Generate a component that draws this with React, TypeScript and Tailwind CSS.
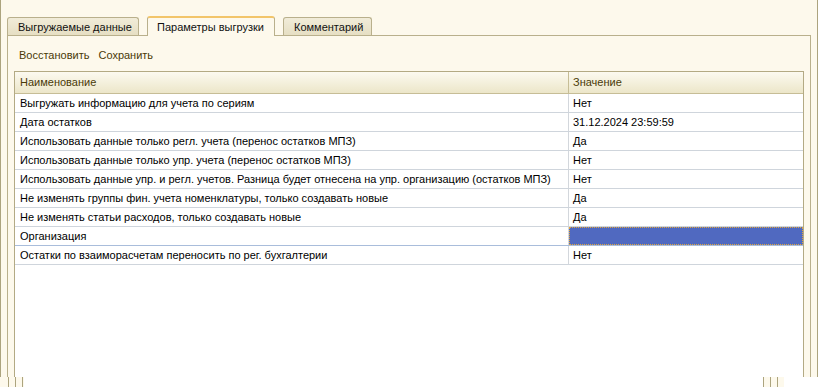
const rows: { name: string; value: string; selected?: boolean }[] = [
  { name: 'Выгружать информацию для учета по сериям', value: 'Нет' },
  { name: 'Дата остатков', value: '31.12.2024 23:59:59' },
  { name: 'Использовать данные только регл. учета (перенос остатков МПЗ)', value: 'Да' },
  { name: 'Использовать данные только упр. учета (перенос остатков МПЗ)', value: 'Нет' },
  {
    name: 'Использовать данные упр. и регл. учетов. Разница будет отнесена на упр. организацию (остатков МПЗ)',
    value: 'Нет',
  },
  { name: 'Не изменять группы фин. учета номенклатуры, только создавать новые', value: 'Да' },
  { name: 'Не изменять статьи расходов, только создавать новые', value: 'Да' },
  { name: 'Организация', value: '', selected: true },
  { name: 'Остатки по взаиморасчетам переносить по рег. бухгалтерии', value: 'Нет' },
];

const tabs = [
  { label: 'Выгружаемые данные', width: 'w-[132px]' },
  { label: 'Параметры выгрузки', width: 'w-[128px]', active: true },
  { label: 'Комментарий', width: 'w-[89px]' },
];

const App = () => {
  return (
    <div className="w-[825px] h-[387px] bg-white flex flex-col overflow-hidden text-[11px] font-['Liberation_Sans',Arial,sans-serif]">
      <div className="w-[818px] h-[377px] bg-[#fdf9ec] border-x border-[#aca47e] px-[6px] pt-[16px] flex flex-col">
        {/* tabs */}
        <div className="flex items-end gap-[8px] h-[19px] relative z-10">
          {tabs.map((tab) =>
            tab.active ? (
              <div
                key={tab.label}
                className={`${tab.width} h-[20px] -mb-px bg-[#fdf9ec] border-x border-t-2 border-x-[#b9b08c] border-t-[#f2c56a] rounded-t-[3px] pl-[9px] pt-[1px] text-[#111]`}
              >
                {tab.label}
              </div>
            ) : (
              <div
                key={tab.label}
                className={`${tab.width} h-[18px] bg-gradient-to-b from-[#f1ecd9] to-[#e6dfc3] border-x border-t border-[#b9b08c] rounded-t-[3px] pl-[10px] pt-[1px] text-[#111]`}
              >
                {tab.label}
              </div>
            )
          )}
        </div>

        {/* panel */}
        <div className="flex-1 border-x border-t border-[#b9b08c] px-[6px] flex flex-col min-h-0">
          <div className="h-[35px] flex items-center gap-[9px] pl-[5px] pt-[3px] text-[#4a3a08]">
            <span>Восстановить</span>
            <span>Сохранить</span>
          </div>

          <div className="flex-1 border-x border-t border-[#b3aa84] bg-white flex flex-col">
            <div className="flex h-[22px] border-b border-[#c6bd96] bg-gradient-to-b from-[#fcfaf0] to-[#ece6c9] text-[#4a3a08]">
              <div className="w-[554px] border-r border-[#c6bd96] pl-[5px] flex items-center">Наименование</div>
              <div className="flex-1 pl-[4px] flex items-center">Значение</div>
            </div>
            {rows.map((row) => (
              <div
                key={row.name}
                className={`flex h-[19px] border-b ${
                  row.selected ? 'border-[#a9bddb]' : 'border-[#cfd5dc]'
                } text-black`}
              >
                <div className="w-[554px] border-r border-[#d3d7dc] pl-[5px] flex items-center whitespace-nowrap">
                  {row.name}
                </div>
                {row.selected ? (
                  <div className="flex-1 bg-[#5069c0] border border-dotted border-[#e0a640]" />
                ) : (
                  <div className="flex-1 pl-[4px] flex items-center">{row.value}</div>
                )}
              </div>
            ))}
          </div>
        </div>
      </div>

      {/* bottom scroll stubs */}
      <div className="h-[10px] flex">
        <div className="w-[24px] bg-[#fdf9ec] flex">
          <div className="w-[8px]" />
          <div className="w-px bg-[#aca47e]" />
          <div className="w-[6px]" />
          <div className="w-px bg-[#aca47e]" />
          <div className="w-[6px]" />
          <div className="w-px bg-[#aca47e]" />
        </div>
        <div className="w-[739px]" />
        <div className="w-[21px] bg-[#fdf9ec] flex">
          <div className="w-px bg-[#aca47e]" />
          <div className="w-[6px]" />
          <div className="w-px bg-[#aca47e]" />
          <div className="w-[6px]" />
          <div className="w-px bg-[#aca47e]" />
        </div>
      </div>
    </div>
  );
};

export default App;
